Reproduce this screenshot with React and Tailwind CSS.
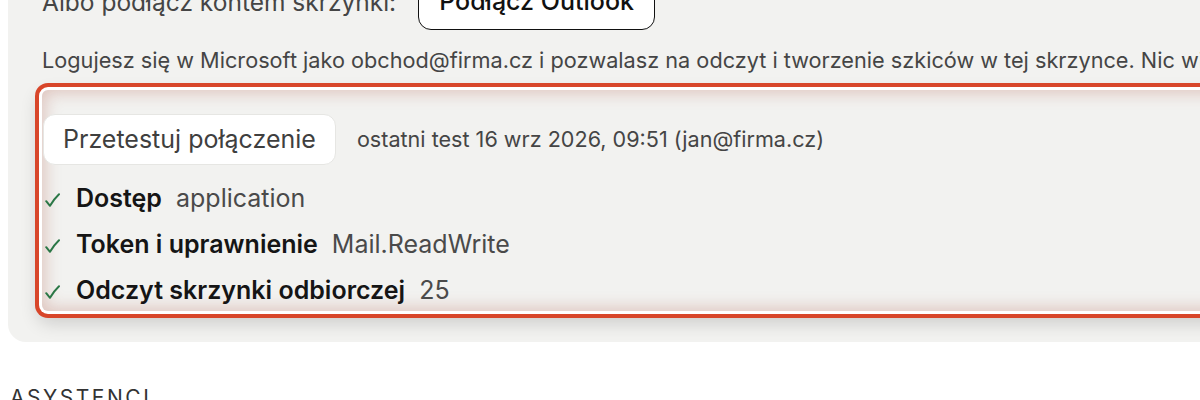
export default function App() {
  const checks = [
    { label: "Dostęp", value: "application" },
    { label: "Token i uprawnienie", value: "Mail.ReadWrite" },
    { label: "Odczyt skrzynki odbiorczej", value: "25" },
  ];

  return (
    <div className="h-[400px] overflow-hidden bg-white font-['Inter','Noto_Sans',sans-serif]">
      <div className="ml-2 -mt-[40px] w-[1300px] rounded-[18px] bg-[#f2f2f0] pb-[31px] pl-[34px]">
        <div className="flex items-center gap-[22px] pt-[14px]">
          <span className="text-[24.5px] text-[#454545]">Albo podłącz kontem skrzynki:</span>
          <button className="h-[56px] rounded-[13px] border-[1.5px] border-[#111] bg-white px-[20px] text-[25px] font-medium text-[#111]">
            Podłącz Outlook
          </button>
        </div>

        <p className="mt-[15px] whitespace-nowrap text-[21.7px] leading-[30px] text-[#454545]">
          Logujesz się w Microsoft jako obchod@firma.cz i pozwalasz na odczyt i tworzenie szkiców w tej skrzynce. Nic więcej nie zmieniamy bez Twojej zgody.
        </p>

        <div className="mt-[15px] rounded-[6px] bg-[#f2f2f0] pt-[24px] pl-px shadow-[0_0_0_3px_#ffffff,0_0_0_7px_#d8462a,0_8px_18px_4px_rgba(0,0,0,0.16),inset_0_0_16px_3px_rgba(165,65,45,0.26)]">
          <div className="flex items-center gap-[21px]">
            <button className="h-[51px] rounded-[12px] border border-[#e6e6e3] bg-white px-[19px] text-[25px] text-[#3f3f3f]">
              Przetestuj połączenie
            </button>
            <span className="text-[21.6px] text-[#454545]">ostatni test 16 wrz 2026, 09:51 (jan@firma.cz)</span>
          </div>
          <ul className="mt-[14px] flex flex-col gap-[6px]">
            {checks.map((c) => (
              <li key={c.label} className="flex h-[40px] items-center text-[25px]">
                <span className="flex w-[33px] pl-[2px] pt-[2px]">
                  <svg width="15" height="14" viewBox="0 0 15 14" fill="none">
                    <path d="M1.2 8.2 L5 12.8 C7.5 8.5 10.5 4.5 14 1.2" stroke="#2b7746" strokeWidth="2" strokeLinecap="round" strokeLinejoin="round" />
                  </svg>
                </span>
                <span className="font-semibold text-[#151515]">{c.label}</span>
                <span className="ml-[14px] text-[#4a4a4a]">{c.value}</span>
              </li>
            ))}
          </ul>
        </div>
      </div>

      <div className="mt-[40px] ml-[10px] text-[21px] tracking-[0.12em] text-[#333]">ASYSTENCI</div>
    </div>
  );
}
